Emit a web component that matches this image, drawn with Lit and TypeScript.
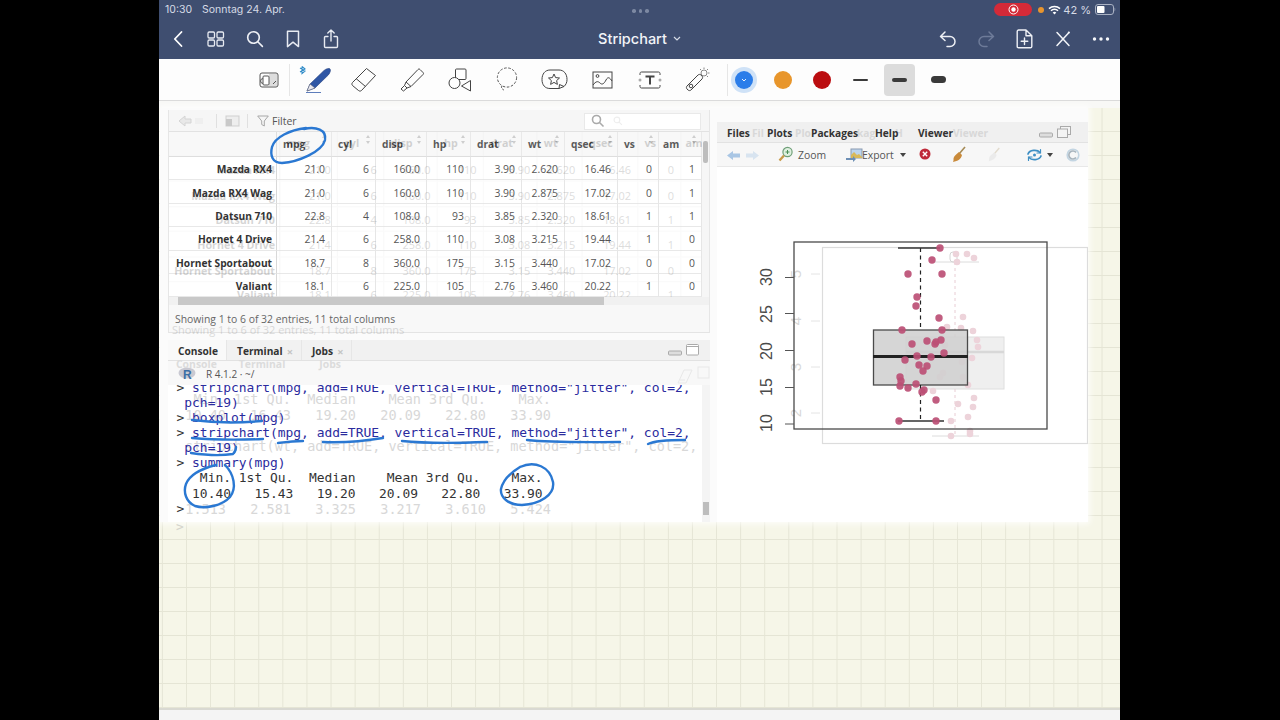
import { LitElement, css, html, svg } from "lit";
import { customElement } from "lit/decorators.js";

const COLS = ["mpg", "cyl", "disp", "hp", "drat", "wt", "qsec", "vs", "am"];
const ROWS: [string, ...string[]][] = [
  ["Mazda RX4", "21.0", "6", "160.0", "110", "3.90", "2.620", "16.46", "0", "1"],
  ["Mazda RX4 Wag", "21.0", "6", "160.0", "110", "3.90", "2.875", "17.02", "0", "1"],
  ["Datsun 710", "22.8", "4", "108.0", "93", "3.85", "2.320", "18.61", "1", "1"],
  ["Hornet 4 Drive", "21.4", "6", "258.0", "110", "3.08", "3.215", "19.44", "1", "0"],
  ["Hornet Sportabout", "18.7", "8", "360.0", "175", "3.15", "3.440", "17.02", "0", "0"],
  ["Valiant", "18.1", "6", "225.0", "105", "2.76", "3.460", "20.22", "1", "0"],
];

// points read off the reference, in page coordinates
const POINTS = [
  [940, 248], [932, 260], [908, 274], [942, 274], [917, 297], [916, 306], [939, 318], [902, 330],
  [942, 330], [927, 341], [941, 340], [912, 344], [936, 342], [935, 344], [944, 353], [917, 356],
  [931, 357], [905, 360], [919, 365], [927, 366], [923, 371], [900, 377], [901, 381], [900, 386],
  [908, 388], [916, 384], [924, 390], [922, 392], [936, 400], [899, 421], [936, 421],
];
const GHOST_POINTS = [
  [956, 254], [967, 254], [974, 258], [957, 262], [963, 317], [947, 327], [961, 328], [973, 331],
  [977, 340], [978, 347], [945, 345], [963, 357], [972, 358], [962, 362], [943, 373], [940, 377],
  [963, 377], [968, 385], [933, 391], [974, 398], [958, 404], [973, 407], [968, 417], [951, 421],
  [970, 431], [970, 434], [951, 436],
];

const ink = (d: string) => svg`<path d=${d} />`;

@customElement("app-root")
export class AppRoot extends LitElement {
  static styles = css`
    :host {
      display: block;
      width: 1280px;
      height: 720px;
      background: #000;
      overflow: hidden;
    }
    svg { display: block; }
    .ipad {
      position: relative;
      margin-left: 159px;
      width: 961px;
      height: 720px;
      display: flex;
      flex-direction: column;
      font-family: Inter, "Liberation Sans", sans-serif;
      background: #f4f4f2;
      overflow: hidden;
    }
    .head {
      height: 59px;
      flex: none;
      background: #3f4e70;
      color: #fff;
    }
    .status {
      height: 19px;
      display: grid;
      grid-template-columns: 1fr auto 1fr;
      align-items: center;
      padding: 0 4px 0 6px;
      box-sizing: border-box;
      font-size: 10.5px;
      color: #d6dbe6;
    }
    .status .left { display: flex; gap: 10px; }
    .status .right { display: flex; justify-content: flex-end; align-items: center; }
    .dots { display: flex; gap: 3px; margin-top: 3px; }
    .dots i { width: 3.5px; height: 3.5px; border-radius: 50%; background: #7d89a3; }
    .rec {
      width: 38px;
      height: 13px;
      border-radius: 7px;
      background: #d42a38;
      display: flex;
      align-items: center;
      justify-content: center;
      margin-right: 6px;
    }
    .cam { width: 6px; height: 6px; border-radius: 50%; background: #e8952e; margin-right: 4px; }
    .batt { font-size: 11px; margin: 0 4px 0 2px; }
    .nav {
      height: 39px;
      display: grid;
      grid-template-columns: 1fr auto 1fr;
      align-items: center;
    }
    .nav .group { display: flex; align-items: center; }
    .nav .group.end { justify-content: flex-end; }
    .nav .slot { width: 38.25px; display: flex; justify-content: center; }
    .title {
      font-size: 14.5px;
      font-weight: 500;
      display: flex;
      align-items: center;
      gap: 6px;
      color: #f2f4f8;
    }
    .tools {
      height: 42px;
      flex: none;
      background: #fdfdfd;
      border-bottom: 1px solid #dadada;
      box-sizing: border-box;
      display: flex;
      align-items: center;
      padding-left: 90px;
    }
    .tools .slot { width: 47.6px; height: 28px; display: flex; align-items: center; justify-content: center; flex: none; }
    .tools .reader { width: 40px; }
    .tools .rule { width: 1px; height: 32px; background: #e6e6e6; flex: none; }
    .tools .pen { margin-left: 3px; }
    .tools .gap { margin: 0 -3.5px 0 5.5px; }
    .tools .swatch { width: 39px; height: 32px; display: flex; align-items: center; justify-content: center; flex: none; }
    .swatch b { display: block; width: 18px; height: 18px; border-radius: 50%; }
    .swatch .blue {
      background: #2b7de9;
      box-shadow: 0 0 0 4px #cfe2f7;
      display: flex;
      align-items: center;
      justify-content: center;
    }
    .swatch .orange { background: #e8962c; }
    .swatch .red { background: #bb0d10; }
    .swatch u { display: block; width: 15px; background: #3a3a3a; border-radius: 4px; }
    .tools .swatch.sel { background: #dcdcdc; border-radius: 4px; width: 31px; margin: 0 4px; }

    .paper {
      position: relative;
      flex: 1;
      min-height: 0;
      background-color: #f6f6e8;
      background-image:
        linear-gradient(to right, #e5e5d5 1px, transparent 1px),
        linear-gradient(to bottom, #e5e5d5 1px, transparent 1px);
      background-size: 24.1px 24px;
      background-position: 2.9px 6px;
      border-bottom: 2px solid #d9d9d2;
    }
    .paper-top {
      position: absolute;
      inset: 0 0 auto 0;
      height: 7px;
      background: #f8f8f6;
    }
    .paper-prompt {
      position: absolute;
      left: 17px;
      top: 418px;
      font-family: "DejaVu Sans Mono", monospace;
      font-size: 12.9px;
      color: #d4d4cc;
    }
    .bottom { height: 10px; flex: none; background: #f4f4f4; }
    .shot {
      position: absolute;
      left: 1px;
      top: 7px;
      width: 928px;
      height: 414px;
      background: #fbfbfb;
      box-shadow: 0 0 6px 2px rgba(255, 255, 255, 0.8);
      display: grid;
      grid-template-columns: 8px 542px 7px 371px;
      box-sizing: border-box;
      padding-top: 2px;
    }
    .left-col { grid-column: 2; display: flex; flex-direction: column; min-height: 0; position: relative; }
    .data-pane { position: relative; background: #f8f8f8; border: 1px solid #e6e6e6; border-top: 0; border-bottom: 1px solid #e4e4e4; }
    .bar {
      height: 22px;
      display: flex;
      align-items: center;
      background: #f6f6f6;
      border-bottom: 1px solid #e2e2e2;
      box-sizing: border-box;
      padding-top: 1px;
      font-family: "Open Sans", sans-serif;
      font-size: 10.5px;
      color: #555;
    }
    .bar .sep { width: 1px; height: 14px; background: #e0e0e0; }
    .search {
      position: relative;
      margin-left: auto;
      margin-right: 8px;
      width: 117px;
      height: 17px;
      background: #fff;
      border: 1px solid #e9e9e9;
      box-sizing: border-box;
      display: flex;
      align-items: center;
      padding-left: 6px;
    }
    .tbl-body { display: flex; background: #fff; }
    .tbl { width: 533px; flex: none; }
    .row {
      display: grid;
      grid-template-columns: 108px 55px 44px 51px 44px 51px 43px 53px 41px 43px;
      height: 23.4px;
      font-family: "Open Sans", sans-serif;
      font-size: 10.4px;
      color: #555;
    }
    .row span {
      display: flex;
      align-items: center;
      justify-content: flex-end;
      padding: 2px 6px 0 0;
      border-right: 1px solid #e6e6e6;
      border-bottom: 1px solid #e8e8e8;
      min-width: 0;
      white-space: nowrap;
    }
    .row span:first-child { font-weight: 700; color: #333; padding-right: 4px; border-right-color: #d8d8d8; font-size: 10.2px; }
    .row.hd { height: 25px; background: #f8f8f8; }
    .row.hd span { position: relative; justify-content: flex-start; padding: 0 0 0 6px; font-weight: 700; color: #333; font-size: 10.2px; border-bottom-color: #dedede; }
    .row.hd span:last-child { padding-left: 4px; }
    .row.hd span svg { position: absolute; right: 4px; top: 3px; }
    .ghost {
      position: absolute;
      left: 1px;
      top: 0;
      width: 533px;
      height: 165px;
      opacity: 0.2;
      transform-origin: 63px 26px;
      transform: scale(1.05, 1.07);
      pointer-events: none;
    }
    .ghost-clip { position: absolute; left: 0; right: 7px; top: 22px; height: 165px; overflow: hidden; pointer-events: none; }
    .vbar { flex: 1; position: relative; background: #f6f6f6; }
    .vbar i { position: absolute; left: 1px; right: 1px; top: 9px; height: 22px; background: #bdbdbd; border-radius: 2px; }
    .hbar { height: 8px; background: #f1f1f1; padding-left: 9px; }
    .hbar i { display: block; width: 426px; height: 8px; background: #c8c8c8; }
    .foot {
      height: 27px;
      display: flex;
      align-items: center;
      padding-left: 6px;
      font-family: "Open Sans", sans-serif;
      font-size: 10.4px;
      color: #666;
      background: #f8f8f8;
      position: relative;
    }
    .foot em {
      position: absolute;
      left: 3px;
      top: 18px;
      font-style: normal;
      white-space: nowrap;
      opacity: 0.22;
      transform: scale(1.055, 1);
      transform-origin: 0 0;
    }

    .console { margin-top: 7px; flex: 1; min-height: 0; display: flex; flex-direction: column; position: relative; }
    .tabs {
      height: 21px;
      flex: none;
      display: flex;
      align-items: stretch;
      background: #f1f1f1;
      border-bottom: 1px solid #e2e2e2;
      box-sizing: border-box;
      font-family: "Open Sans", sans-serif;
      font-size: 10.2px;
      font-weight: 700;
      color: #333;
    }
    .tabs > span { display: flex; align-items: center; gap: 4px; padding: 2px 8px 0 10px; border-right: 1px solid #e6e6e6; }
    .tabs > span:first-child { background: #f9f9f9; padding-left: 10px; }
    .tabs s { text-decoration: none; color: #c4c4c4; font-size: 11px; }
    .win { margin-left: auto; margin-right: 10px; display: flex; align-items: center; gap: 3px; }
    .subbar {
      height: 24px;
      flex: none;
      display: flex;
      align-items: center;
      padding: 1px 0 0 10px;
      box-sizing: border-box;
      gap: 10px;
      background: #f8f8f8;
      font-family: "Open Sans", sans-serif;
      font-size: 10px;
      color: #555;
    }
    .ghost-tabs {
      position: absolute;
      left: 8px;
      top: 17px;
      display: flex;
      font-family: "Open Sans", sans-serif;
      font-size: 10.4px;
      font-weight: 700;
      color: #dcdcdc;
      pointer-events: none;
    }
    .ghost-tabs span:nth-child(2) { margin-left: 22px; }
    .ghost-tabs span:nth-child(3) { margin-left: 34px; }
    .ghost-win { position: absolute; right: 0; top: 26px; pointer-events: none; }
    .out-wrap { flex: 1; display: flex; min-height: 0; background: #fff; position: relative; overflow: hidden; }
    pre {
      flex: 1;
      margin: -5.5px 0 0 0;
      padding-left: 8.5px;
      font-family: "DejaVu Sans Mono", monospace;
      font-size: 12.95px;
      line-height: 15.1px;
      color: #333;
      position: relative;
    }
    pre b { font-weight: 400; color: #2b2b9e; }
    pre.faint {
      position: absolute;
      inset: 0;
      margin-top: 7px;
      padding-left: 1px;
      font-size: 13.5px;
      line-height: 15.7px;
      color: #d8d8d8;
    }
    .out-bar { width: 8px; flex: none; background: #f4f4f4; position: relative; z-index: 1; }
    .out-bar i { position: absolute; left: 1px; right: 1px; top: 117px; height: 13px; background: #bdbdbd; }

    .right-col { grid-column: 4; margin-top: 12px; display: flex; flex-direction: column; min-height: 0; }
    .tabs.plots { background: #f0f0f0; gap: 0; position: relative; }
    .tabs.plots > span { padding: 0; border: 0; background: none; position: absolute; top: 4px; }
    .ptools {
      height: 24px;
      flex: none;
      display: flex;
      align-items: center;
      background: #f7f7f7;
      font-family: "Open Sans", sans-serif;
      font-size: 10.4px;
      color: #555;
      position: relative;
      border-bottom: 1px solid #e8e8e8;
      box-sizing: border-box;
    }
    .ptools > * { position: absolute; }
    .plot { flex: 1; background: #fff; min-height: 0; }

    .ink {
      position: absolute;
      left: 0;
      top: 0;
      pointer-events: none;
    }
    .ink path { fill: none; stroke: #2a78d2; stroke-width: 2.4; stroke-linecap: round; stroke-linejoin: round; }
  `;

  private sortIcon() {
    return html`<svg width="6" height="10" viewBox="0 0 6 10"><path d="M3 0l2 3H1zM3 9L1 6h4z" fill="#c4c4c4" /></svg>`;
  }

  private table(ghost: boolean) {
    return html`<div class="tbl ${ghost ? "ghost" : ""}">
      <div class="row hd"><span></span>${COLS.map((c) => html`<span>${c}${ghost ? "" : this.sortIcon()}</span>`)}</div>
      ${ROWS.map((r) => html`<div class="row">${r.map((v) => html`<span>${v}</span>`)}</div>`)}
    </div>`;
  }

  private status() {
    return html`<div class="status">
      <div class="left"><span>10:30</span><span>Sonntag 24. Apr.</span></div>
      <div class="dots"><i></i><i></i><i></i></div>
      <div class="right">
        <div class="rec">
          <svg width="11" height="11" viewBox="0 0 11 11"><circle cx="5.5" cy="5.5" r="4.5" fill="none" stroke="#fff" stroke-width="1" /><circle cx="5.5" cy="5.5" r="2.2" fill="#fff" /></svg>
        </div>
        <div class="cam"></div>
        <svg width="13" height="10" viewBox="0 0 13 10"><path d="M1 3.6a8 8 0 0 1 11 0M3 5.8a5 5 0 0 1 7 0" fill="none" stroke="#fff" stroke-width="1.5" /><path d="M6.5 9.6L4.7 7.6a2.6 2.6 0 0 1 3.6 0z" fill="#fff" /></svg>
        <span class="batt">42 %</span>
        <svg width="21" height="11" viewBox="0 0 21 11"><rect x=".5" y=".5" width="18" height="10" rx="2.5" fill="none" stroke="#a9b1c3" /><rect x="2" y="2" width="7.5" height="7" rx="1" fill="#fff" /><path d="M19.6 3.6c.9.3.9 3.5 0 3.8z" fill="#a9b1c3" /></svg>
      </div>
    </div>`;
  }

  private nav() {
    return html`<div class="nav">
      <div class="group">
        <div class="slot">
          <svg width="12" height="18" viewBox="0 0 12 18"><path d="M9.5 2L2.8 9l6.7 7" fill="none" stroke="#fff" stroke-width="1.8" stroke-linecap="round" stroke-linejoin="round" /></svg>
        </div>
        <div class="slot">
          <svg width="18" height="16" viewBox="0 0 18 16" fill="none" stroke="#e8ebf2" stroke-width="1.3"><rect x="1" y="1" width="6.5" height="6" rx="1.2" /><rect x="10" y="1" width="6.5" height="6" rx="1.2" /><rect x="1" y="9" width="6.5" height="6" rx="1.2" /><rect x="10" y="9" width="6.5" height="6" rx="1.2" /></svg>
        </div>
        <div class="slot">
          <svg width="18" height="18" viewBox="0 0 18 18" fill="none" stroke="#f0f2f7" stroke-width="1.6" stroke-linecap="round"><circle cx="7.5" cy="7.5" r="5.8" /><path d="M11.8 11.8l4.6 4.6" /></svg>
        </div>
        <div class="slot">
          <svg width="14" height="18" viewBox="0 0 14 18"><path d="M1.5 1.2h11v15.4L7 12.2l-5.5 4.4z" fill="none" stroke="#e8ebf2" stroke-width="1.5" stroke-linejoin="round" /></svg>
        </div>
        <div class="slot">
          <svg width="16" height="20" viewBox="0 0 16 20" fill="none" stroke="#e8ebf2" stroke-width="1.4" stroke-linecap="round" stroke-linejoin="round"><path d="M8 1v11M4.8 4L8 1l3.2 3M5 7.5H2.5a1 1 0 0 0-1 1v9a1 1 0 0 0 1 1h11a1 1 0 0 0 1-1v-9a1 1 0 0 0-1-1H11" /></svg>
        </div>
      </div>
      <div class="title">
        <span>Stripchart</span>
        <svg width="8" height="5" viewBox="0 0 8 5"><path d="M1 1l3 3 3-3" fill="none" stroke="#d6dbe6" stroke-width="1.2" /></svg>
      </div>
      <div class="group end">
        <div class="slot">
          <svg width="18" height="18" viewBox="0 0 18 18" fill="none" stroke="#eef0f5" stroke-width="1.5" stroke-linecap="round" stroke-linejoin="round"><path d="M6 2L1.5 6.5 6 10.5M1.5 6.5H11a5 5 0 0 1 0 10H8" /></svg>
        </div>
        <div class="slot">
          <svg width="18" height="18" viewBox="0 0 18 18" fill="none" stroke="#6e7b99" stroke-width="1.5" stroke-linecap="round" stroke-linejoin="round"><path d="M12 2l4.5 4.5L12 10.5M16.5 6.5H7a5 5 0 0 0 0 10h3" /></svg>
        </div>
        <div class="slot">
          <svg width="17" height="20" viewBox="0 0 17 20" fill="none" stroke="#eef0f5" stroke-width="1.4" stroke-linecap="round" stroke-linejoin="round"><path d="M10 1H2.6a1.4 1.4 0 0 0-1.4 1.4v15a1.4 1.4 0 0 0 1.4 1.4h11.8a1.4 1.4 0 0 0 1.4-1.4V6.8zM10 1v5.8h5.8M8.5 9v6.5M5.2 12.2h6.6" /></svg>
        </div>
        <div class="slot">
          <svg width="16" height="16" viewBox="0 0 16 16" fill="none" stroke="#f2f4f8" stroke-linecap="round"><path d="M2 14.5L14 1.5" stroke-width="1.5" /><path d="M2 1.5l12 13" stroke-width="1.5" /><circle cx="13.8" cy="1.6" r="1" fill="#f2f4f8" stroke="none" /></svg>
        </div>
        <div class="slot">
          <svg width="18" height="4" viewBox="0 0 18 4" fill="#f6f7fa"><circle cx="2.5" cy="2" r="1.7" /><circle cx="9" cy="2" r="1.7" /><circle cx="15.5" cy="2" r="1.7" /></svg>
        </div>
      </div>
    </div>`;
  }

  private tools() {
    return html`<div class="tools">
      <div class="slot reader">
        <svg width="20" height="16" viewBox="0 0 20 16" fill="none" stroke="#555" stroke-width="1"><rect x="1" y="1" width="18" height="14" rx="2" /><rect x="10" y="2" width="8" height="12" fill="#ddd" stroke="none" /><circle cx="4" cy="9" r="2.4" /><rect x="4" y="4" width="6" height="9" rx="1" fill="#fff" /><path d="M14 12l3-3" /></svg>
      </div>
      <div class="rule"></div>
      <div class="slot pen">
        <svg width="36" height="28" viewBox="0 0 36 28">
          <path d="M3 .5v7L6 5 1 2M3 .5L6 3 1 6" fill="none" stroke="#2f8bc8" stroke-width="1.1" />
          <path d="M8 25l3-7L25 4.5c2-1.8 5-2.6 6-1.6s.2 3.8-1.6 6L16 22z" fill="#2f56a5" stroke="#23407e" stroke-width=".6" />
          <path d="M11 18l5 4-8 3z" fill="#e8e8ee" stroke="#556" stroke-width=".5" />
          <path d="M7 26.5h15" stroke="#5d7dbb" stroke-width="1" />
        </svg>
      </div>
      <div class="slot">
        <svg width="26" height="26" viewBox="0 0 26 26" fill="none" stroke="#444" stroke-width="1" stroke-linejoin="round"><path d="M1.5 15.5L15.5 1.5l9 7-14 15c-1 .8-2 .8-3 0l-6-5c-.8-.8-.8-2 0-3z" /><path d="M5 11.5l9.5 8" /></svg>
      </div>
      <div class="slot">
        <svg width="26" height="25" viewBox="0 0 26 25" fill="none" stroke="#444" stroke-width="1" stroke-linejoin="round"><path d="M7 15L19 2.5c.7-.7 1.3-.7 2 0l3 3c.7.7.7 1.3 0 2L12 19.5z" /><path d="M7 15l-1.5 3.5 2.5 2.5 4-1.5M5.5 18.5L2 22l2.5 2 3.5-3" /></svg>
      </div>
      <div class="slot">
        <svg width="24" height="24" viewBox="0 0 24 24" fill="none" stroke="#444" stroke-width="1"><rect x="7.5" y="1" width="10.5" height="10.5" rx="1" fill="#fff" /><circle cx="6.5" cy="15" r="5.5" fill="#fff" /><path d="M22.5 12.5v10.5l-9-5z" fill="#fff" stroke-linejoin="round" /></svg>
      </div>
      <div class="slot">
        <svg width="24" height="25" viewBox="0 0 24 25" fill="none" stroke="#555" stroke-width="1"><circle cx="12" cy="10.5" r="9.6" stroke-dasharray="2.6 1.6" /><path d="M7 19c-1.500 1.500 0 3 2.500 4.500" stroke-dasharray="2 1.400" /></svg>
      </div>
      <div class="slot">
        <svg width="27" height="21" viewBox="0 0 27 21" fill="none" stroke="#444" stroke-width="1" stroke-linejoin="round"><path d="M18 19.500H9C4 19.500 1 16 1 10.500S4 1 9 1h9c5 0 8 4 8 9.500 0 3-1 5-3 7z" /><path d="M18 19.500l.5-4 4.500 2" /><path d="M13 5l1.600 3.600 3.900.4-2.900 2.600.8 3.800-3.400-2-3.400 2 .8-3.800L7.500 9l3.900-.4z" /></svg>
      </div>
      <div class="slot">
        <svg width="21" height="18" viewBox="0 0 21 18" fill="none" stroke="#444" stroke-width="1"><rect x="1" y="1" width="19" height="16" /><circle cx="5.500" cy="5" r="1.400" /><path d="M1 14c3-4 5-4 7-2s4 1 6-3 4-2 6 1" /></svg>
      </div>
      <div class="slot">
        <svg width="24" height="18" viewBox="0 0 24 18" fill="none" stroke="#444" stroke-width="1"><path d="M2 4V2.500C2 1.600 2.600 1 3.500 1h17c.9 0 1.500.6 1.500 1.500V4M2 14v1.500c0 .9.600 1.500 1.500 1.500h17c.9 0 1.500-.6 1.500-1.500V14" /><circle cx="2" cy="9" r="1.500" fill="#aaa" stroke="none" /><circle cx="22" cy="9" r="1.500" fill="#aaa" stroke="none" /><path d="M7.500 5.500h9M12 5.500v8" stroke-width="2" /></svg>
      </div>
      <div class="slot">
        <svg width="25" height="25" viewBox="0 0 25 25" fill="none" stroke="#444" stroke-width="1"><path d="M2 19L13 8c1-.8 2-.8 3 0l1 1c.8 1 .8 2 0 3L6 23c-1 .8-2 .8-3 0l-1-1c-.8-1-.8-2 0-3z" /><circle cx="6" cy="19" r="1.800" /><circle cx="19" cy="6" r="3" stroke="#888" /><path d="M19 .5v1.500M24.500 6H23M23 2l-1 1M15 2l1 1M23 10l-1-1" stroke="#888" /></svg>
      </div>
      <div class="rule gap"></div>
      <div class="swatch">
        <b class="blue"><svg width="6" height="4" viewBox="0 0 6 4"><path d="M1 1l2 2 2-2" fill="none" stroke="#fff" stroke-width=".9" /></svg></b>
      </div>
      <div class="swatch"><b class="orange"></b></div>
      <div class="swatch"><b class="red"></b></div>
      <div class="swatch"><u style="height:2px"></u></div>
      <div class="swatch sel"><u style="height:4px"></u></div>
      <div class="swatch"><u style="height:7px"></u></div>
    </div>`;
  }

  private dataPane() {
    return html`<div class="data-pane">
      <div class="bar">
        <svg width="30" height="14" viewBox="0 0 30 14" style="margin:0 8px 0 9px"><path d="M1 7l6-5v3h6v4H7v3z" fill="#e8e8e8" stroke="#d4d4d4" /><path d="M17 4h8v6h-8z" fill="#efefef" /></svg>
        <span class="sep"></span>
        <svg width="16" height="12" viewBox="0 0 16 12" style="margin:0 7px 0 7px"><rect x="2" y="1" width="13" height="10" fill="#eee" stroke="#cfcfcf" /><rect x="2" y="4" width="6" height="7" fill="#c9c9c9" /></svg>
        <span class="sep"></span>
        <svg width="12" height="12" viewBox="0 0 12 12" style="margin:0 3px 0 9px"><path d="M.7 1h10.600L7.300 6v5L4.700 9.500V6z" fill="none" stroke="#a8a8a8" /></svg>
        <span>Filter</span>
        <div class="search">
          <svg width="14" height="14" viewBox="0 0 14 14" fill="none" stroke="#aaa" stroke-width="1.600"><circle cx="5.500" cy="5.500" r="4" /><path d="M8.500 8.500l4 4" /></svg>
          <svg width="10" height="10" viewBox="0 0 14 14" fill="none" stroke="#eee" stroke-width="1.600" style="margin-left:8px"><circle cx="5.500" cy="5.500" r="4" /><path d="M8.500 8.500l4 4" /></svg>
        </div>
      </div>
      <div class="tbl-body">
        ${this.table(false)}
        <div class="vbar"><i></i></div>
      </div>
      <div class="ghost-clip">${this.table(true)}</div>
      <div class="hbar"><i></i></div>
      <div class="foot">
        <span>Showing 1 to 6 of 32 entries, 11 total columns</span>
        <em>Showing 1 to 6 of 32 entries, 11 total columns</em>
      </div>
    </div>`;
  }

  private consolePane() {
    return html`<div class="console">
      <div class="tabs">
        <span>Console</span>
        <span>Terminal <s>×</s></span>
        <span>Jobs <s>×</s></span>
        <div class="win">
          <svg width="15" height="6" viewBox="0 0 15 6" style="margin-top:6px"><rect x=".5" y="1" width="13" height="4" rx="1" fill="#ddd" stroke="#aaa" /></svg>
          <svg width="14" height="12" viewBox="0 0 14 12"><rect x=".5" y=".5" width="12" height="10.500" rx="1" fill="#fff" stroke="#aaa" /><path d="M.5 2.500h12" stroke="#aaa" /></svg>
        </div>
      </div>
      <div class="subbar">
        <svg width="18" height="14" viewBox="0 0 18 14"><ellipse cx="9" cy="6" rx="8.500" ry="5.500" fill="#c9c9d2" /><text x="5" y="12" font-family="Liberation Sans, sans-serif" font-size="12" font-weight="700" fill="#3a6ea5">R</text></svg>
        <span>R 4.1.2 · ~/</span>
      </div>
      <div class="ghost-tabs"><span>Console</span><span>Terminal</span><span>Jobs</span></div>
      <svg class="ghost-win" width="36" height="18" viewBox="0 0 36 18" fill="none" stroke="#e8e8e8"><path d="M4 17L10 4h8L12 17zM6 14h5" /><rect x="24" y="1" width="11" height="11" /></svg>
      <div class="out-wrap">
        <pre class="faint">
   Min. 1st Qu.  Median    Mean 3rd Qu.    Max.
  10.40   16.43   19.20   20.09   22.80   33.90

  stripchart(wt, add=TRUE, vertical=TRUE, method="jitter", col=2, pch=19)



  1.513   2.581   3.325   3.217   3.610   5.424</pre>
        <pre>&gt; <b>stripchart(mpg, add=TRUE, vertical=TRUE, method="jitter", col=2,</b>
 <b>pch=19)</b>
&gt; <b>boxplot(mpg)</b>
&gt; <b>stripchart(mpg, add=TRUE, vertical=TRUE, method="jitter", col=2,</b>
 <b>pch=19)</b>
&gt; <b>summary(mpg)</b>
   Min. 1st Qu.  Median    Mean 3rd Qu.    Max. 
  10.40   15.43   19.20   20.09   22.80   33.90 
&gt;</pre>
        <div class="out-bar"><i></i></div>
      </div>
    </div>`;
  }

  private plotPane() {
    const tab = (t: string, x: number, ghost = false) =>
      html`<span style="left:${x}px;${ghost ? "color:#d8d8d8" : ""}">${t}</span>`;
    return html`<div class="right-col">
      <div class="tabs plots">
        ${tab("Fil", 35, true)} ${tab("Plo", 78, true)} ${tab("kag", 140, true)} ${tab("H", 178, true)} ${tab("Viewer", 236, true)}
        ${tab("Files", 10)} ${tab("Plots", 50)} ${tab("Packages", 94)} ${tab("Help", 158)} ${tab("Viewer", 201)}
        <div class="win" style="position:absolute;right:17px;top:4px;margin:0">
          <svg width="15" height="6" viewBox="0 0 15 6" style="margin-top:5px"><rect x=".5" y="1" width="13" height="4" rx="1" fill="#ddd" stroke="#aaa" /></svg>
          <svg width="14" height="12" viewBox="0 0 14 12" fill="#f4f4f4" stroke="#aaa"><rect x="3.500" y=".5" width="10" height="8" /><rect x=".5" y="3" width="10" height="8.500" /></svg>
        </div>
      </div>
      <div class="ptools">
        <svg style="left:9px;top:7px" width="34" height="11" viewBox="0 0 34 11"><path d="M1 5.500L7 1v2.500h7v4H7V10z" fill="#a9c6e4" /><path d="M33 5.500L27 1v2.500h-7v4h7V10z" fill="#d8e4f0" /></svg>
        <svg style="left:61px;top:3px" width="15" height="16" viewBox="0 0 15 16"><circle cx="9.500" cy="6" r="4.600" fill="#dff0e0" stroke="#6f9f78" stroke-width="1.200" /><path d="M7.500 6h4M9.500 4v4" stroke="#4b8f57" /><path d="M6 9.500L1.500 14.500" stroke="#c89a4a" stroke-width="2.400" /></svg>
        <span style="left:81px">Zoom</span>
        <svg style="left:128px;top:5px" width="18" height="14" viewBox="0 0 18 14"><rect x="6" y="1" width="11" height="9" fill="#bcd4ee" stroke="#8a9ab0" /><path d="M6 7l3-3 3 3 2-1 3 3v1H6z" fill="#d9b95a" /><path d="M1 10h7V8l3 3-3 3v-2H1z" fill="#6d8fb5" /></svg>
        <span style="left:145px">Export</span>
        <svg style="left:183px;top:10px" width="6" height="4" viewBox="0 0 6 4"><path d="M0 0h6L3 4z" fill="#444" /></svg>
        <svg style="left:202px;top:5px" width="12" height="12" viewBox="0 0 12 12"><circle cx="6" cy="6" r="5.500" fill="#bf2a3a" /><path d="M3.800 3.800l4.400 4.400M8.200 3.800l-4.400 4.400" stroke="#fff" stroke-width="1.400" /></svg>
        <svg style="left:234px;top:3px" width="16" height="18" viewBox="0 0 16 18"><path d="M14 1L8 8" stroke="#a58a55" stroke-width="1.600" /><path d="M8 6l3 3c-1 4-4 6-9 7 1-2 0-3 1-5s3-3 5-5z" fill="#c98a3a" /></svg>
        <svg style="left:270px;top:4px" width="14" height="16" viewBox="0 0 16 18" opacity=".25"><path d="M14 1L8 8" stroke="#a58a55" stroke-width="1.600" /><path d="M8 6l3 3c-1 4-4 6-9 7 1-2 0-3 1-5s3-3 5-5z" fill="#c9c9c9" /></svg>
        <svg style="left:309px;top:5px" width="17" height="14" viewBox="0 0 17 14" fill="none" stroke="#3f8fc4" stroke-width="1.700" stroke-linecap="round"><path d="M2 6c1.500-4 9-5 12-1.500M15 8c-1.500 4-9 5-12 1.500" /><path d="M14.500 1.500v3.500h-3.500M2.500 12.500V9H6" stroke-width="1.200" /><circle cx="8.500" cy="7" r="1.500" fill="#3f8fc4" stroke="none" /></svg>
        <svg style="left:330px;top:10px" width="6" height="4" viewBox="0 0 6 4"><path d="M0 0h6L3 4z" fill="#444" /></svg>
        <svg style="left:349px;top:5px" width="14" height="14" viewBox="0 0 14 14" fill="none" stroke="#c3d5e2" stroke-width="1.600"><circle cx="7" cy="7" r="5.800" /><path d="M10 4.500A4 4 0 1 0 10 9.500" stroke="#a8b4bd" /></svg>
      </div>
      <div class="plot">
        <svg width="371" height="355" viewBox="717 167 371 355">
          <g fill="none" stroke="#dcdcdc" stroke-width="1.200">
            <rect x="822.500" y="247.500" width="265" height="196" />
          </g>
          <rect x="906" y="337" width="98" height="52" fill="#efefef" stroke="#dedede" />
          <path d="M906 352h98" stroke="#d8d8d8" stroke-width="2.400" />
          <path d="M955 262v75M955 389v47" stroke="#e8cdd4" stroke-dasharray="3 3" />
          <path d="M935 262h44M932 436h47" stroke="#dcdcdc" />
          <rect x="950" y="252" width="7" height="10" rx="3" fill="none" stroke="#d4d4d4" />
          <path d="M820 274h-9M820 321h-9M820 367h-9M820 413h-9" stroke="#e4e4e4" />
          <g font-family="Liberation Sans, sans-serif" font-size="15" fill="#d8d8d8" text-anchor="middle">
            <text transform="translate(801 274) rotate(-90)">5</text>
            <text transform="translate(801 321) rotate(-90)">4</text>
            <text transform="translate(801 367) rotate(-90)">3</text>
            <text transform="translate(801 413) rotate(-90)">2</text>
          </g>
          ${GHOST_POINTS.map(([x, y]) => svg`<circle cx=${x} cy=${y} r="3.300" fill="#edd3da" />`)}

          <rect x="794" y="242" width="253" height="187" fill="none" stroke="#4a4a4a" stroke-width="1.300" />
          <rect x="873.500" y="330" width="94" height="55" fill="#cfcfcf" fill-opacity=".85" stroke="#4a4a4a" stroke-width="1.300" />
          <path d="M873 356.500h95" stroke="#222" stroke-width="3" />
          <path d="M920.500 248v82M920.500 385v36" stroke="#222" stroke-width="1.200" stroke-dasharray="4 3.500" />
          <path d="M898 248h42M898 421h46" stroke="#333" stroke-width="1.300" />
          <path d="M785 277.500h9M785 313.500h9M785 350.500h9M785 387.500h9M785 424h9" stroke="#555" />
          <g font-family="Liberation Sans, sans-serif" font-size="16" fill="#4a4a4a" text-anchor="middle">
            <text transform="translate(772 277) rotate(-90)">30</text>
            <text transform="translate(772 314) rotate(-90)">25</text>
            <text transform="translate(772 351) rotate(-90)">20</text>
            <text transform="translate(772 387) rotate(-90)">15</text>
            <text transform="translate(772 423) rotate(-90)">10</text>
          </g>
          ${POINTS.map(([x, y]) => svg`<circle cx=${x} cy=${y} r="3.700" fill="#bc4f75" fill-opacity=".92" />`)}
        </svg>
      </div>
    </div>`;
  }

  render() {
    return html`<div class="ipad">
      <div class="head">${this.status()} ${this.nav()}</div>
      ${this.tools()}
      <div class="paper">
        <div class="paper-top"></div>
        <div class="shot">
          <div class="left-col">${this.dataPane()} ${this.consolePane()}</div>
          ${this.plotPane()}
        </div>
        <div class="paper-prompt">&gt;</div>
      </div>
      <div class="bottom"></div>
      <svg class="ink" width="961" height="720" viewBox="159 0 961 720">
        ${ink("M304 129C316 126 327 130 325 140C322 152 298 162 282 163C272 163 270 155 272 147C275 137 290 130 306 128")}
        ${ink("M192 420C215 423 240 423 262 421")}
        ${ink("M192 438C215 440 240 440 263 439")}
        ${ink("M278 443C286 442 295 441 303 441")}
        ${ink("M323 442C345 443 365 441 383 438")}
        ${ink("M402 441C430 444 460 443 487 442")}
        ${ink("M527 440C555 443 590 442 620 442")}
        ${ink("M648 444C656 440 672 440 685 440")}
        ${ink("M191 453C205 455 220 456 233 454C235 452 236 449 236 447")}
        ${ink("M225 465C234 474 237 488 230 497C222 506 205 509 195 506C186 502 183 492 186 484C190 474 204 468 216 465")}
        ${ink("M520 467C535 460 550 467 553 482C555 495 540 504 522 505C508 505 500 497 501 489C503 480 510 473 520 467")}
      </svg>
    </div>`;
  }
}
